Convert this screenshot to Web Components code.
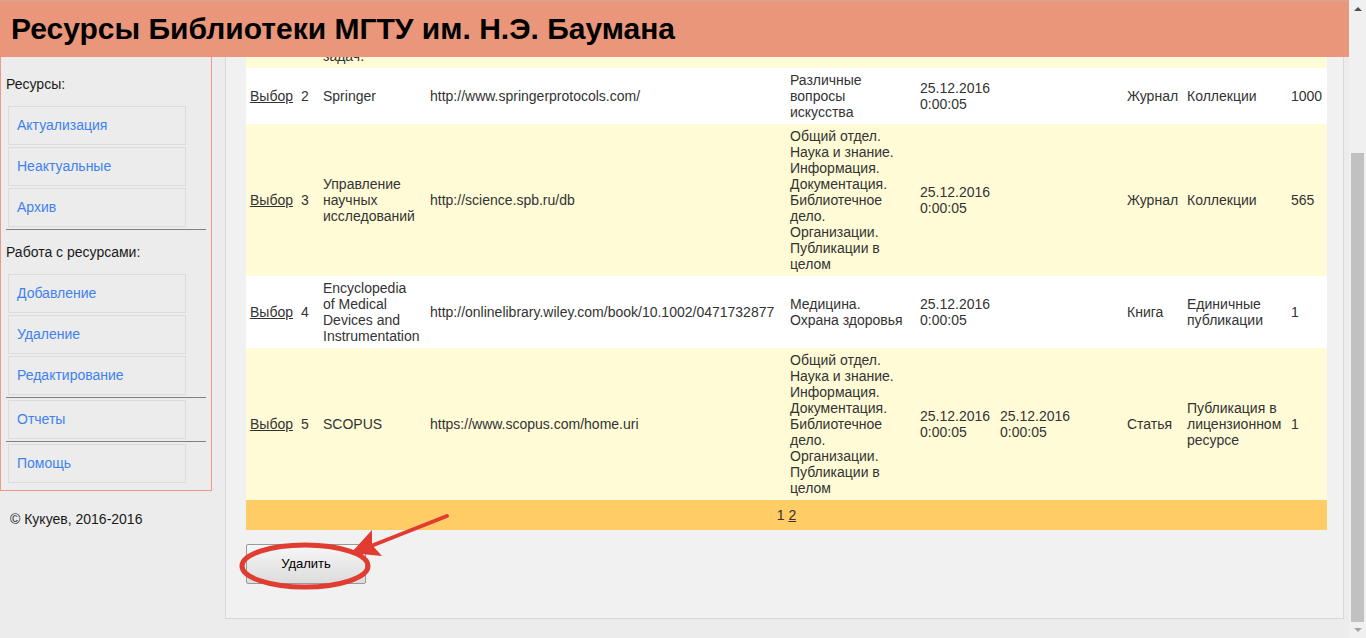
<!DOCTYPE html>
<html lang="ru">
<head>
<meta charset="utf-8">
<title>Ресурсы Библиотеки МГТУ им. Н.Э. Баумана</title>
<style>
  html, body { margin: 0; height: 100%; }
  body { font: 14px/16px "Liberation Sans", Arial, sans-serif; color: #1a1a1a; background: #ececec; }
</style>
</head>
<body>
<library-page>
  <page-header slot="header">Ресурсы Библиотеки МГТУ им. Н.Э. Баумана</page-header>
  <side-nav slot="side">
    <nav-group heading="Ресурсы:">
      <nav-item>Актуализация</nav-item>
      <nav-item>Неактуальные</nav-item>
      <nav-item>Архив</nav-item>
    </nav-group>
    <nav-group heading="Работа с ресурсами:">
      <nav-item>Добавление</nav-item>
      <nav-item>Удаление</nav-item>
      <nav-item>Редактирование</nav-item>
    </nav-group>
    <nav-group><nav-item>Отчеты</nav-item></nav-group>
    <nav-group><nav-item>Помощь</nav-item></nav-group>
  </side-nav>
  <page-copyright slot="side">© Кукуев, 2016-2016</page-copyright>
  <content-panel slot="main">
    <resource-table></resource-table>
    <delete-action>Удалить</delete-action>
  </content-panel>
  <scroll-rail slot="rail"></scroll-rail>
</library-page>

<script>
const define = (name, html, setup) => customElements.define(name, class extends HTMLElement {
  constructor() {
    super();
    this.attachShadow({ mode: 'open' }).innerHTML = html;
  }
  connectedCallback() { if (setup) setup(this, this.shadowRoot); }
});

define('library-page', `
  <style>
    :host { display: grid; grid-template-columns: minmax(0, 1fr) 17px; height: 100vh; overflow: hidden; }
    .view { overflow: hidden; }
    .body { display: grid; grid-template-columns: 212px minmax(0, 1fr); column-gap: 13px; padding-right: 5px; }
  </style>
  <div class="view">
    <slot name="header"></slot>
    <div class="body">
      <aside><slot name="side"></slot></aside>
      <main><slot name="main"></slot></main>
    </div>
  </div>
  <slot name="rail"></slot>`);

define('page-header', `
  <style>
    :host { display: block; position: sticky; top: 0; z-index: 2; background: #e9967a; border-top: 2px solid #dfa08c; padding: 9px 11px 10px; color: #000; }
    h1 { margin: 0; font-size: 30px; line-height: 36px; font-weight: bold; white-space: nowrap; }
  </style>
  <h1><slot></slot></h1>`);

define('side-nav', `
  <style>
    :host { display: block; border: 1px solid #f09a84; border-top: 0; padding: 0 5px 7px; }
    nav { display: block; }
  </style>
  <nav><slot></slot></nav>`);

define('nav-group', `
  <style>
    :host { display: block; border-bottom: 1px solid #808080; padding-bottom: 2px; }
    :host(:last-of-type) { border-bottom: 0; padding-bottom: 0; }
    h2 { margin: 0; padding: 14px 0 12px; font-size: 14px; line-height: 16px; font-weight: normal; }
    :host(:first-of-type) h2 { padding-top: 19px; }
    .items { display: grid; gap: 2px; padding: 2px 20px 0 2px; }
  </style>
  <div class="items"><slot></slot></div>`,
  (host, root) => {
    const heading = host.getAttribute('heading');
    if (heading && !root.querySelector('h2')) {
      const h = document.createElement('h2');
      h.textContent = heading;
      root.insertBefore(h, root.querySelector('.items'));
    }
  });

define('nav-item', `
  <style>
    :host { display: block; }
    a { display: block; border: 1px solid #dcdcdc; padding: 10px 8px 11px; color: #3f82ee; text-decoration: none; }
  </style>
  <a href="#"><slot></slot></a>`);

define('page-copyright', `
  <style>:host { display: block; padding: 20px 10px; }</style>
  <slot></slot>`);

define('content-panel', `
  <style>
    :host { display: block; margin-top: -13px; background: #f1f1f1; border: 1px solid #d8d8d8; border-top: 0; padding: 0 16px 34px 20px; }
  </style>
  <slot></slot>`);

const rows = [
  ['1', 'задач.', '', '', '', '', '', '', '', ''],
  ['2', 'Springer', 'http://www.springerprotocols.com/', 'Различные вопросы искусства', '25.12.2016 0:00:05', '', '', 'Журнал', 'Коллекции', '1000'],
  ['3', 'Управление научных исследований', 'http://science.spb.ru/db', 'Общий отдел. Наука и знание. Информация. Документация. Библиотечное дело. Организации. Публикации в целом', '25.12.2016 0:00:05', '', '', 'Журнал', 'Коллекции', '565'],
  ['4', 'Encyclopedia of&nbsp;Medical Devices and Instrumentation', 'http://onlinelibrary.wiley.com/book/10.1002/0471732877', 'Медицина. Охрана здоровья', '25.12.2016 0:00:05', '', '', 'Книга', 'Единичные публикации', '1'],
  ['5', 'SCOPUS', 'https://www.scopus.com/home.uri', 'Общий отдел. Наука и знание. Информация. Документация. Библиотечное дело. Организации. Публикации в целом', '25.12.2016 0:00:05', '25.12.2016 0:00:05', '', 'Статья', 'Публикация в лицензионном ресурсе', '1'],
];
const rowHtml = (r, i) => i === 0
  ? `<tr><td></td><td></td><td>${r[1]}</td><td colspan="8"></td></tr>`
  : `<tr><td><a href="#">Выбор</a></td>${r.map(c => `<td>${c}</td>`).join('')}</tr>`;

define('resource-table', `
  <style>
    :host { display: block; color: #333; }
    table { width: 100%; table-layout: fixed; border-collapse: collapse; }
    td { padding: 4px; vertical-align: middle; text-align: left; }
    tbody tr { background: #fffbd6; }
    tbody tr:nth-child(even) { background: #fff; }
    a { color: inherit; }
    tfoot td { background: #ffcc66; text-align: center; padding: 7px; }
    .select { width: 51px; } .num { width: 22px; } .name { width: 107px; } .topic { width: 130px; }
    .date { width: 80px; } .note { width: 47px; } .kind { width: 60px; } .type { width: 104px; } .count { width: 40px; }
  </style>
  <table>
    <colgroup><col class="select"><col class="num"><col class="name"><col><col class="topic"><col class="date"><col class="date"><col class="note"><col class="kind"><col class="type"><col class="count"></colgroup>
    <tbody>${rows.map(rowHtml).join('')}</tbody>
    <tfoot><tr><td colspan="11">1 <a href="#">2</a></td></tr></tfoot>
  </table>`);

define('delete-action', `
  <style>
    :host { display: block; position: relative; width: 120px; margin-top: 14px; }
    button { display: block; width: 100%; height: 40px; font: inherit; font-size: 13px; color: #000; padding: 0; border: 1px solid #999; border-radius: 2px; background: linear-gradient(#f7f7f7, #dcdcdc); }
    svg { position: absolute; left: -8px; top: -32px; pointer-events: none; }
  </style>
  <button type="button"><slot></slot></button>
  <svg width="216" height="80" viewBox="0 0 216 80" aria-hidden="true">
    <ellipse cx="67" cy="54" rx="63" ry="21" fill="none" stroke="#e03c31" stroke-width="5"/>
    <path d="M209 4L133 34" stroke="#e03c31" stroke-width="4" stroke-linecap="round"/>
    <path d="M113 41L134 18L134 33L144 44Z" fill="#e03c31"/>
  </svg>`);

define('scroll-rail', `
  <style>
    :host { display: grid; grid-template-rows: 17px 136fr 469fr 16px; background: #f0f0f0; justify-items: center; align-items: center; min-height: 0; }
    .thumb { grid-row: 3; width: 13px; height: 100%; background: #c1c1c1; }
    .down { grid-row: 4; }
    svg { display: block; }
  </style>
  <svg width="8" height="4" viewBox="0 0 8 4"><path d="M0 4L4 0L8 4Z" fill="#505050"/></svg>
  <div class="thumb"></div>
  <svg class="down" width="8" height="4" viewBox="0 0 8 4"><path d="M0 0L4 4L8 0Z" fill="#a3a3a3"/></svg>`);
</script>
</body>
</html>
